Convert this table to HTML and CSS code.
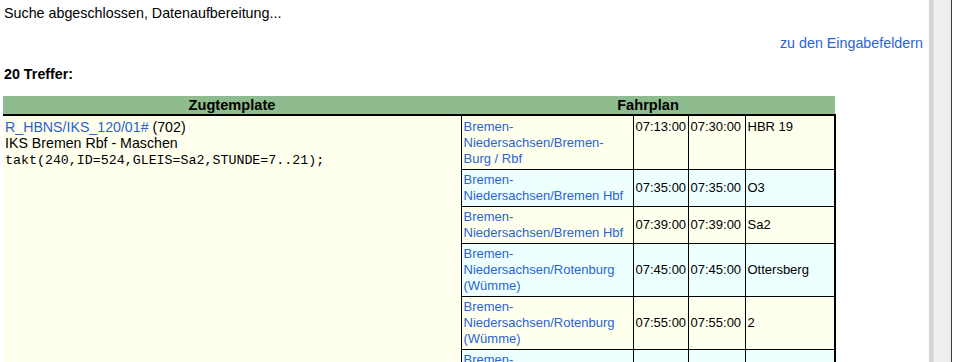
FILE: index.html
```html
<!DOCTYPE html>
<html>
<head>
<meta charset="utf-8">
<link rel="stylesheet" href="styles.css">
</head>
<body>
<div class="frame">
  <main class="content">
    <div class="status">Suche abgeschlossen, Datenaufbereitung...</div>
    <div class="backlink"><a href="#">zu den Eingabefeldern</a></div>
    <div class="hits">20 Treffer:</div>
    <table class="result">
      <colgroup>
        <col class="c-tpl"><col class="c-stn"><col class="c-t1"><col class="c-t2"><col class="c-gl">
      </colgroup>
      <thead>
        <tr><th class="h-tpl">Zugtemplate</th><th class="h-fp" colspan="4">Fahrplan</th></tr>
      </thead>
      <tbody>
        <tr class="r-y r-first">
          <td class="tpl" rowspan="7">
            <a href="#">R_HBNS/IKS_120/01#</a> (702)<br>
            IKS Bremen Rbf - Maschen<br>
            <code>takt(240,ID=524,GLEIS=Sa2,STUNDE=7..21);</code>
          </td>
          <td class="stn"><a href="#">Bremen-<br>Niedersachsen/Bremen-<br>Burg / Rbf</a></td>
          <td>07:13:00</td><td>07:30:00</td><td class="gl">HBR 19</td>
        </tr>
        <tr class="r-c">
          <td class="stn"><a href="#">Bremen-<br>Niedersachsen/Bremen Hbf</a></td>
          <td>07:35:00</td><td>07:35:00</td><td class="gl">O3</td>
        </tr>
        <tr class="r-y">
          <td class="stn"><a href="#">Bremen-<br>Niedersachsen/Bremen Hbf</a></td>
          <td>07:39:00</td><td>07:39:00</td><td class="gl">Sa2</td>
        </tr>
        <tr class="r-c">
          <td class="stn"><a href="#">Bremen-<br>Niedersachsen/Rotenburg<br>(Wümme)</a></td>
          <td>07:45:00</td><td>07:45:00</td><td class="gl">Ottersberg</td>
        </tr>
        <tr class="r-y">
          <td class="stn"><a href="#">Bremen-<br>Niedersachsen/Rotenburg<br>(Wümme)</a></td>
          <td>07:55:00</td><td>07:55:00</td><td class="gl">2</td>
        </tr>
        <tr class="r-c">
          <td class="stn"><a href="#">Bremen-<br>Niedersachsen/Scheeßel</a></td>
          <td>08:02:00</td><td>08:02:00</td><td class="gl">1</td>
        </tr>
        <tr class="r-y">
          <td class="stn"><a href="#">Bremen-<br>Niedersachsen/Tostedt</a></td>
          <td>08:14:00</td><td>08:14:00</td><td class="gl">2</td>
        </tr>
      </tbody>
    </table>
  </main>
  <div class="sidebar">
    <div class="sb-shade"></div>
    <div class="sb-hl"></div>
    <div class="sb-track"></div>
    <div class="sb-edge"></div>
    <div class="sb-rest"></div>
  </div>
</div>
</body>
</html>
```
FILE: styles.css
```css
html, body {
  margin: 0;
  padding: 0;
  height: 100%;
  overflow: hidden;
  background: #fff;
}
body {
  font-family: "Liberation Sans", Arial, sans-serif;
  font-size: 13px;
  line-height: 16px;
  color: #000;
}
a {
  color: #2a63d4;
  text-decoration: none;
}
.frame {
  display: flex;
  height: 362px;
}
.content {
  width: 929px;
  flex: none;
  padding: 5px 6px 0 3px;
  box-sizing: border-box;
  display: flex;
  flex-direction: column;
}
.status {
  height: 16px;
  font-size: 14.3px;
  padding-left: 1px;
}
.backlink {
  margin-top: 14px;
  text-align: right;
  height: 16px;
  font-size: 14.3px;
}
.hits {
  margin-top: 15px;
  font-weight: bold;
  height: 16px;
  font-size: 14.3px;
  padding-left: 1px;
}
.result {
  margin-top: 14px;
  border-collapse: collapse;
  table-layout: fixed;
  width: 832px;
}
.c-tpl { width: 458px; }
.c-stn { width: 172px; }
.c-t1 { width: 55px; }
.c-t2 { width: 57px; }
.c-gl { width: 90px; }
.result th {
  background: #8fbc8f;
  font-weight: bold;
  font-size: 14.6px;
  padding: 1px 2px;
  text-align: center;
  border: none;
  border-bottom: 2px solid #000;
  height: 16px;
}
.result td {
  border: 1px solid #000;
  padding: 2px;
  vertical-align: middle;
  white-space: nowrap;
}
.result td.tpl {
  border-left: none;
  border-bottom: none;
  background: #ffffee;
  vertical-align: top;
  padding: 3px 2px 2px 2px;
  font-size: 14.2px;
}
.result td.gl {
  border-right: 2px solid #000;
}
.r-y td { background: #ffffee; }
.r-c td { background: #eeffff; }
.r-first td { vertical-align: top; padding-top: 3px; }
code {
  font-family: "Liberation Mono", "Courier New", monospace;
  font-size: 13.3px;
}
.sidebar {
  flex: 1;
  display: flex;
}
.sb-shade {
  width: 5px;
  background: linear-gradient(to right, #d2d2d2, #dadada);
}
.sb-hl {
  width: 1px;
  background: #f8f8f8;
}
.sb-track {
  width: 16px;
  background: #eeeeee;
}
.sb-edge {
  width: 1px;
  background: #2c3e4c;
}
.sb-rest {
  flex: 1;
  background: #fff;
}
```
